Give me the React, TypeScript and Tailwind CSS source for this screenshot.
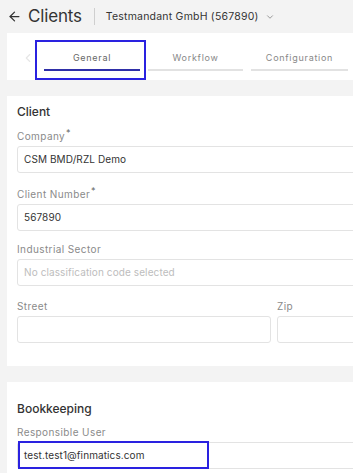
import { ArrowLeft, ChevronDown, ChevronLeft } from "lucide-react";

const font = { fontFamily: "Inter, 'Open Sans', sans-serif" };

function Field({ label, required, value, placeholder, className }: { label: string; required?: boolean; value?: string; placeholder?: string; className?: string }) {
    return (
        <div className={className}>
            <div className="h-[14px] text-[10px] leading-[14px] tracking-[0.04em] text-[#8a8a8a]">
                {label}
                {required && <sup className="ml-[1px] text-[9px] text-[#666]">*</sup>}
            </div>
            <div className="mt-[3px] flex h-[27px] items-center rounded-[3px] border border-[#e3e3e3] bg-white px-[6px] text-[10px] tracking-[0.01em]">
                {value ? <span className="text-[#333]">{value}</span> : <span className="text-[#bdbdbd]">{placeholder}</span>}
            </div>
        </div>
    );
}

export default function App() {
    return (
        <div className="relative h-[473px] w-[353px] overflow-hidden bg-[#f3f3f3]" style={font}>
            <div className="flex h-[33px] items-center pl-[7px]">
                <ArrowLeft size={15} strokeWidth={2} className="text-[#333]" />
                <span className="ml-[6px] text-[17px] leading-none tracking-[-0.01em] text-[#333]">Clients</span>
                <div className="ml-[12px] h-[17px] w-px bg-[#cfcfcf]" />
                <span className="ml-[11px] text-[10.5px] tracking-[0.02em] text-[#333]">Testmandant GmbH (567890)</span>
                <ChevronDown size={10} className="ml-[6px] text-[#888]" />
            </div>

            <div className="ml-[7px] flex h-[47px] w-[360px] items-start bg-white">
                <ChevronLeft size={14} className="ml-[14px] mt-[18px] text-[#e6e6e6]" />
                <div className="ml-[9px] flex gap-[8px] pt-[18px]">
                    <div className="w-[96px]">
                        <div className="text-center text-[9px] tracking-[0.08em] text-[#666]">General</div>
                        <div className="mt-[4px] h-[2px] bg-[#2f2fa8]" />
                    </div>
                    <div className="w-[95px]">
                        <div className="text-center text-[9px] tracking-[0.08em] text-[#888]">Workflow</div>
                        <div className="mt-[4px] h-[2px] bg-[#e2e2e2]" />
                    </div>
                    <div className="w-[97px]">
                        <div className="text-center text-[9px] tracking-[0.08em] text-[#888]">Configuration</div>
                        <div className="mt-[4px] h-[2px] bg-[#e2e2e2]" />
                    </div>
                </div>
            </div>

            <div className="ml-[7px] mt-[16px] h-[270px] w-[380px] bg-white pl-[10px] pt-[7px]">
                <div className="h-[18px] text-[12px] font-medium leading-[18px] text-[#333]">Client</div>
                <Field className="mt-[8px]" label="Company" required value="CSM BMD/RZL Demo" />
                <Field className="mt-[14px]" label="Client Number" required value="567890" />
                <Field className="mt-[11px]" label="Industrial Sector" placeholder="No classification code selected" />
                <div className="mt-[13px] flex gap-[6px]">
                    <Field className="w-[254px]" label="Street" />
                    <Field className="flex-1" label="Zip" />
                </div>
            </div>

            <div className="ml-[7px] mt-[16px] h-[100px] w-[380px] bg-white pl-[10px] pt-[18px]">
                <div className="h-[18px] text-[12px] font-medium leading-[18px] text-[#333]">Bookkeeping</div>
                <Field className="mt-[7px]" label="Responsible User" value="test.test1@finmatics.com" />
            </div>

            <div className="absolute left-[35px] top-[40px] h-[40px] w-[111px] border-2 border-[#2a22e0]" />
            <div className="absolute left-[18px] top-[441px] h-[28px] w-[191px] border-2 border-[#2a22e0]" />
        </div>
    );
}
